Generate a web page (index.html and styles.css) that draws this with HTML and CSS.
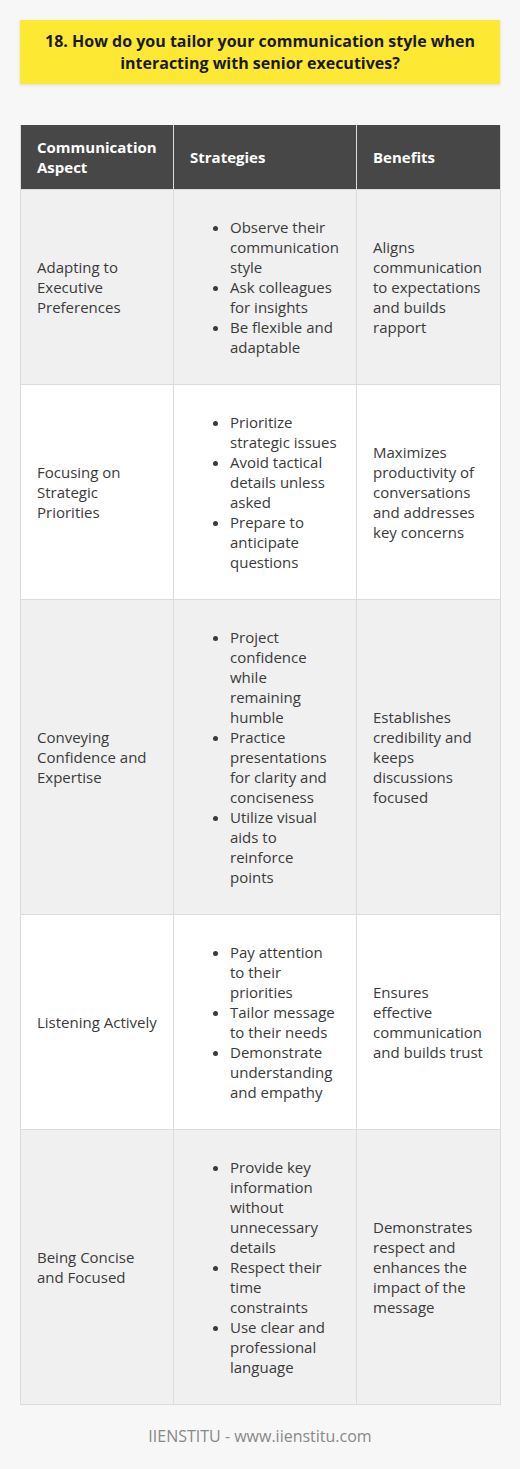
FILE: index.html
```html
<!DOCTYPE html>
<html lang="en">
<head>
<meta charset="utf-8">
<link rel="stylesheet" href="styles.css">
</head>
<body>
<div class="page">
  <h1 class="title">18. How do you tailor your communication style when interacting with senior executives?</h1>
  <table class="grid">
    <colgroup>
      <col class="c1"><col class="c2"><col class="c3">
    </colgroup>
    <thead>
      <tr><th>Communication Aspect</th><th>Strategies</th><th>Benefits</th></tr>
    </thead>
    <tbody>
      <tr>
        <td>Adapting to Executive Preferences</td>
        <td><ul><li>Observe their communication style</li><li>Ask colleagues for insights</li><li>Be flexible and adaptable</li></ul></td>
        <td>Aligns communication to expectations and builds rapport</td>
      </tr>
      <tr>
        <td>Focusing on Strategic Priorities</td>
        <td><ul><li>Prioritize strategic issues</li><li>Avoid tactical details unless asked</li><li>Prepare to anticipate questions</li></ul></td>
        <td>Maximizes productivity of conversations and addresses key concerns</td>
      </tr>
      <tr>
        <td>Conveying Confidence and Expertise</td>
        <td><ul><li>Project confidence while remaining humble</li><li>Practice presentations for clarity and conciseness</li><li>Utilize visual aids to reinforce points</li></ul></td>
        <td>Establishes credibility and keeps discussions focused</td>
      </tr>
      <tr>
        <td>Listening Actively</td>
        <td><ul><li>Pay attention to their priorities</li><li>Tailor message to their needs</li><li>Demonstrate understanding and empathy</li></ul></td>
        <td>Ensures effective communication and builds trust</td>
      </tr>
      <tr>
        <td>Being Concise and Focused</td>
        <td><ul><li>Provide key information without unnecessary details</li><li>Respect their time constraints</li><li>Use clear and professional language</li></ul></td>
        <td>Demonstrates respect and enhances the impact of the message</td>
      </tr>
    </tbody>
  </table>
  <p class="footer">IIENSTITU - www.iienstitu.com</p>
</div>
</body>
</html>
```

FILE: styles.css
```css
html, body {
  margin: 0;
  padding: 0;
  background: #f7f7f7;
}
body {
  font-family: "Open Sans", "Liberation Sans", sans-serif;
  color: #333;
}
.page {
  padding: 20px 20px 0 20px;
}
.title {
  margin: 0;
  background: #fde934;
  box-shadow: 0 1px 3px rgba(0,0,0,0.12);
  padding: 10px 16px;
  font-size: 16px;
  line-height: 22px;
  font-weight: 700;
  text-align: center;
  color: #1a1a1a;
}
.grid {
  margin-top: 41px;
  width: 480px;
  border-collapse: collapse;
  table-layout: fixed;
  font-size: 15px;
  line-height: 20px;
}
.c1 { width: 153px; }
.c2 { width: 183px; }
.c3 { width: 144px; }
.grid th {
  background: #474747;
  color: #fff;
  font-weight: 700;
  text-align: left;
  padding: 12px 16px;
  border: 1px solid #dcdcdc;
  border-top: none;
}
.grid td {
  padding: 12px 16px;
  border: 1px solid #dcdcdc;
  vertical-align: middle;
  color: #3a3a3a;
}
.grid tbody tr:nth-child(odd) td { background: #f0f0f0; }
.grid tbody tr:nth-child(even) td { background: #ffffff; }
.grid ul {
  margin: 15px 0;
  padding-left: 40px;
}
.footer {
  margin: 20px 0 0 0;
  text-align: center;
  font-size: 16px;
  line-height: 22px;
  color: #888;
  padding-bottom: 20px;
}
```
